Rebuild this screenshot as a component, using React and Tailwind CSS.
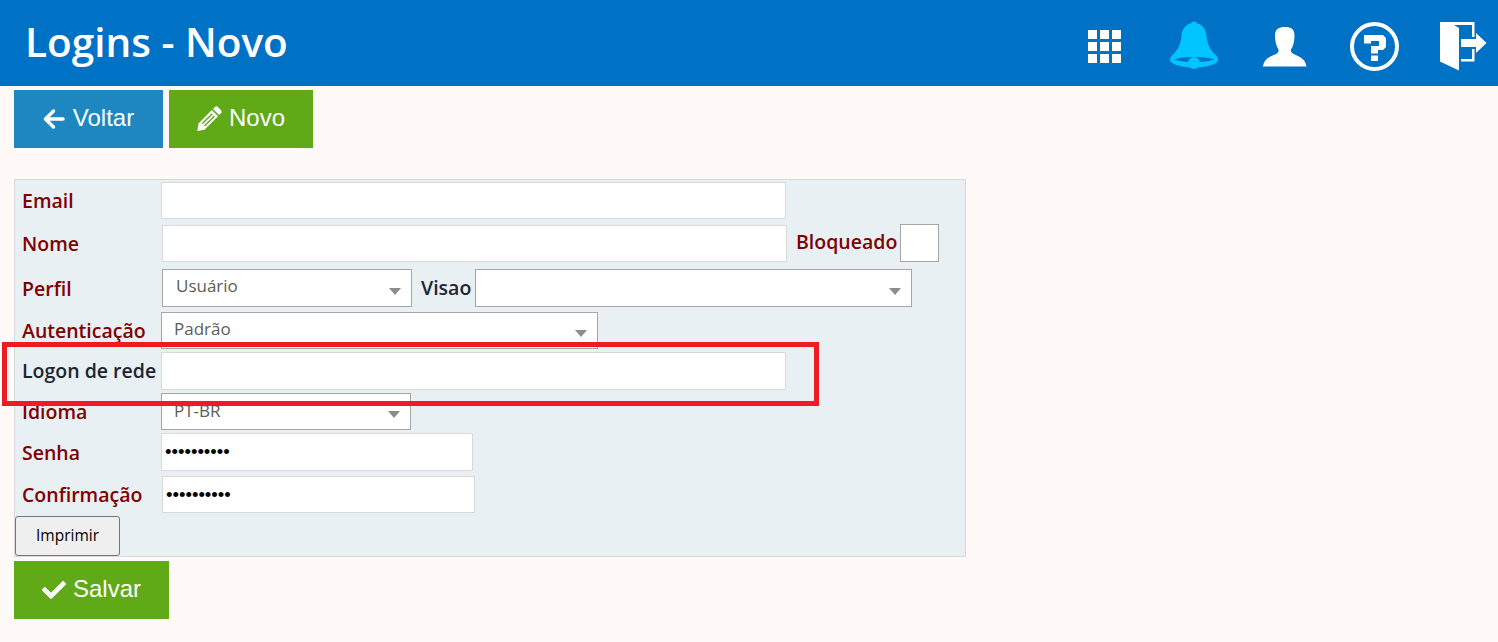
import React from "react";
import { FaCheck } from "react-icons/fa";

const FONT = "[font-family:'Open_Sans','Noto_Sans',sans-serif]";

function GridIcon() {
  const c = [];
  for (let y = 0; y < 3; y++) for (let x = 0; x < 3; x++) c.push(<rect key={x + "-" + y} x={x * 12} y={y * 12} width="9" height="9" />);
  return <svg width="33" height="33" viewBox="0 0 33 33" fill="#fff">{c}</svg>;
}
function BellIcon() {
  return (
    <svg width="50" height="50" viewBox="0 0 50 50" fill="#00c4ff">
      <circle cx="25" cy="3.500" r="3" />
      <path d="M25 2c-8 0-12 6-12.500 13-.6 8-3.500 14-10 20-2 2-2 5 0 6.500C7 45 16 46.500 25 46.500S43 45 47.500 41.500c2-1.500 2-4.500 0-6.500-6.500-6-9.400-12-10-20C37 8 33 2 25 2z" />
      <path d="M5 38.500C10 36.500 17 35.700 25 35.700s15 .8 20 2.800c-5 1.800-12 2.700-20 2.700S10 40.300 5 38.500z" fill="#0072c6" />
      <path d="M7 37.500C12 34.500 17 33.800 25 33.800s13 .7 18 3.700C38 36 32 35.500 25 35.500S12 36 7 37.500z" fill="#00c4ff" />
      <circle cx="25" cy="42" r="6" />
    </svg>
  );
}
function PersonIcon() {
  return (
    <svg width="44" height="40" viewBox="0 0 44 40" fill="#fff">
      <path d="M22 0c-6 0-10 2-10 8.500 0 5 1 10 3 13 1 1.500.8 3.500-.5 4.500C11 29 1.500 29.500 0 39.500h43.500C42 29.500 33 29 29 26c-1.300-1-1.500-3-.5-4.500 2-3 3-8 3-13C31.500 2 28 0 22 0z" />
    </svg>
  );
}
function HelpIcon() {
  return (
    <svg width="49" height="49" viewBox="0 0 49 49">
      <circle cx="24.500" cy="24.500" r="22.500" fill="none" stroke="#fff" strokeWidth="4" />
      <path d="M14 13h19l3 3v9l-3 3h-5v3.500h-7V24h8v-5H21v2.500h-7z" fill="#fff" />
      <rect x="21" y="33.500" width="7" height="5.500" fill="#fff" />
    </svg>
  );
}
function ExitIcon() {
  return (
    <svg width="47" height="49" viewBox="0 0 47 49" fill="#fff">
      <path d="M0 0h34.500v15H32V3H14l5 3v42.500L0 39.500z" />
      <path d="M32 27h2.500v12.500H21V37h11z" />
      <path d="M21 17h15v-6l10.500 10L36 31v-6H21z" />
    </svg>
  );
}
function ArrowIcon() {
  return (
    <svg width="22" height="22" viewBox="0 0 22 22" fill="none" stroke="#fff" strokeWidth="3.500" strokeLinecap="round" strokeLinejoin="round">
      <path d="M20 11H3M10.500 3 2.500 11l8 8" />
    </svg>
  );
}
function PencilIcon() {
  return (
    <svg width="25" height="25" viewBox="0 0 25 25" fill="#fff">
      <path d="M18 .9c.8-.8 2-.8 2.800 0l3.300 3.300c.8.8.8 2 0 2.800l-2 2-6.100-6.100z" />
      <path d="M14.800 4 21 10.200 7.500 23.700.3 25 1.500 17.400zM14.800 7.200 4.700 17.300l1 1L15.800 8.200zM17 9.400 6.900 19.500l1 1L18 10.400z" fillRule="evenodd" />
    </svg>
  );
}

function ActionButton({ bg, width, icon, label, gap = "gap-[7px]" }) {
  return (
    <button className={`flex h-[58px] items-center justify-center ${gap} pb-[1px] text-[24px] text-white [font-family:'Liberation_Sans',Arial,sans-serif] ${bg} ${width}`}>
      {icon}
      <span className="-mt-[2px]">{label}</span>
    </button>
  );
}

function Label({ children, dark, width = "w-[147px]", shift = "" }) {
  return (
    <span className={`${width} ${shift} shrink-0 whitespace-nowrap text-[19.500px] font-semibold leading-none ${dark ? "text-[#1d2530]" : "text-[#800000]"}`}>
      {children}
    </span>
  );
}

function TextInput({ width, height = "h-[38px]", type = "text", value = "", ml = "" }) {
  return (
    <input
      type={type}
      defaultValue={value}
      className={`${width} ${height} ${ml} shrink-0 border border-[#d9d9d9] bg-white px-[3px] text-black outline-none [font-family:'Liberation_Sans',Arial,sans-serif] ${type === "password" ? "text-[18.500px]" : "text-[13.333px]"}`}
    />
  );
}

function Select({ width, value, height = "h-[38px]", textClass = "pb-[3px]" }) {
  return (
    <div className={`${width} ${height} flex shrink-0 items-center justify-between border border-[#a6a6a6] bg-white pl-[12px] pr-[10px]`}>
      <span className={`text-[17px] font-normal leading-none text-[#5c5c5c] ${textClass}`}>{value}</span>
      <svg width="12" height="7" viewBox="0 0 12 7" className="mt-[6px]" fill="#8c8c8c"><path d="M0 0h12L6 7z" /></svg>
    </div>
  );
}

export default function App() {
  return (
    <div className={`relative h-[642px] w-[1498px] overflow-hidden bg-[#fffaf8] ${FONT}`}>
      <header className="flex h-[86px] items-center justify-between bg-[#0072c6] pb-[2px] pl-[25px] pr-[11px]">
        <h1 className="text-[40.500px] font-semibold leading-none text-white">Logins - Novo</h1>
        <div className="flex items-center pt-[8px]">
          <GridIcon />
          <span className="ml-[48px]"><BellIcon /></span>
          <span className="ml-[44px] mt-[2px]"><PersonIcon /></span>
          <span className="ml-[43px]"><HelpIcon /></span>
          <span className="ml-[41px]"><ExitIcon /></span>
        </div>
      </header>

      <div className="ml-[14px] mt-[4px] flex gap-[6px]">
        <ActionButton bg="bg-[#1e87c0]" width="w-[149px]" gap="gap-[8px]" icon={<ArrowIcon />} label="Voltar" />
        <ActionButton bg="bg-[#60a917]" width="w-[144px]" icon={<PencilIcon />} label="Novo" />
      </div>

      <form className="relative ml-[14px] mt-[31px] h-[378px] w-[952px] border border-[#d4d9dc] bg-[#e8f0f3] pl-[7px] pt-[2px]">
        <div className="flex h-[37px] items-center">
          <Label width="w-[139px]">Email</Label>
          <TextInput width="w-[625px]" height="h-[37px]" />
        </div>
        <div className="mt-[5px] flex h-[38px] items-center">
          <Label width="w-[140px]" shift="mt-[1px]">Nome</Label>
          <TextInput width="w-[625px]" height="h-[37px]" />
          <span className="ml-[9px] w-[101px]"><Label width="w-auto">Bloqueado</Label></span>
          <input type="text" className="ml-[3px] h-[38px] w-[39px] border border-[#a6a6a6] bg-white outline-none" />
        </div>
        <div className="mt-[7px] flex h-[38px] items-center">
          <Label width="w-[140px]" shift="mt-[1px]">Perfil</Label>
          <Select width="w-[250px]" value="Usuário" textClass="pb-[5px] pl-[1px]" />
          <span className="ml-[9px] mt-[1px] w-[54px]"><Label dark width="w-[54px]">Visao</Label></span>
          <Select width="w-[437px]" value="" />
        </div>
        <div className="mt-[5px] flex h-[37px] items-center">
          <Label width="w-[139px]">Autenticação</Label>
          <Select width="w-[437px]" height="h-[37px]" value="Padrão" textClass="pb-[4px]" />
        </div>
        <div className="mt-[3px] flex h-[38px] items-center">
          <Label dark width="w-[139px]">Logon de rede</Label>
          <TextInput width="w-[625px]" />
        </div>
        <div className="mt-[3px] flex h-[37px] items-center">
          <Label width="w-[139px]">Idioma</Label>
          <Select width="w-[250px]" height="h-[37px]" value="PT-BR" textClass="pb-[3px]" />
        </div>
        <div className="mt-[3px] flex h-[38px] items-center">
          <Label width="w-[139px]" shift="mt-[1px]">Senha</Label>
          <TextInput width="w-[312px]" type="password" value="1234567890" />
        </div>
        <div className="mt-[5px] flex h-[37px] items-center">
          <Label width="w-[140px]">Confirmação</Label>
          <TextInput width="w-[313px]" height="h-[37px]" type="password" value="1234567890" />
        </div>
        <button type="button" className="-ml-[7px] mt-[3px] block h-[40px] w-[105px] rounded-[3px] border border-[#767676] bg-[#efefef] pb-[1px] text-[15.500px] font-normal leading-none text-black">
          Imprimir
        </button>
      </form>

      <div className="ml-[14px] mt-[4px]">
        <ActionButton bg="bg-[#60a917]" width="w-[155px]" icon={<FaCheck className="h-[24px] w-[24px]" />} label="Salvar" />
      </div>

      <div className="pointer-events-none absolute left-[2px] top-[342px] h-[64px] w-[817px] border-[5px] border-[#ed1c24]" />
    </div>
  );
}
